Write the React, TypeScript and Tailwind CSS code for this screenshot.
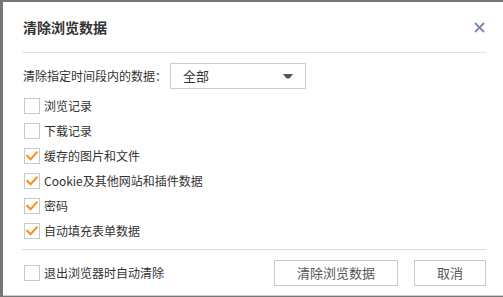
import React from 'react';

const font = { fontFamily: '"Noto Sans CJK SC", "Noto Sans", sans-serif' };

const items = [
  { label: '浏览记录', checked: false },
  { label: '下载记录', checked: false },
  { label: '缓存的图片和文件', checked: true },
  { label: 'Cookie及其他网站和插件数据', checked: true },
  { label: '密码', checked: true },
  { label: '自动填充表单数据', checked: true },
];

function Checkbox({ checked }: { checked: boolean }) {
  return (
    <span className="w-4 h-4 border border-[#c9c9c9] bg-white flex items-center justify-center flex-shrink-0">
      {checked && (
        <svg width="14" height="14" viewBox="0 0 14 14">
          <path d="M2.2 6.8 L5.6 10.2 L11.8 3.4" fill="none" stroke="#ff8a1c" strokeWidth="2" strokeLinecap="square" />
        </svg>
      )}
    </span>
  );
}

export default function App() {
  return (
    <div className="w-[503px] h-[297px] bg-[#767676] pl-[3px] pt-[2px] overflow-hidden" style={font}>
      <div className="h-[294px] bg-white border-b border-[#cfcfcf] pl-[19px] pr-[17px] text-[#333] text-[12px]">
        <div className="h-[50px] flex items-center justify-between">
          <h1 className="pl-px text-[14px] font-bold text-[#333]">清除浏览数据</h1>
          <svg width="11" height="11" viewBox="0 0 11 11" className="mr-px">
            <path d="M1 1 L10 10 M10 1 L1 10" stroke="#7b8aa6" strokeWidth="1.8" />
          </svg>
        </div>
        <div className="border-t border-[#dfe1e6]" />

        <div className="mt-[10px] flex items-center h-[26px]">
          <span className="w-[148px] pl-px">清除指定时间段内的数据：</span>
          <div className="w-[136px] h-[26px] border border-[#cccccc] flex items-center justify-between pl-[12px] pr-[12px]">
            <span className="text-[13px]">全部</span>
            <svg width="10" height="5" viewBox="0 0 10 5">
              <path d="M0 0 H10 L6.5 4.5 H3.5 Z" fill="#555" />
            </svg>
          </div>
        </div>

        <div className="mt-[4px]">
          {items.map((it) => (
            <label key={it.label} className="h-[25px] flex items-center gap-[4px] ml-[2px]">
              <Checkbox checked={it.checked} />
              <span>{it.label}</span>
            </label>
          ))}
        </div>

        <div className="mt-[6px] border-t border-[#dcdcdc]" />

        <div className="mt-[10px] h-[26px] flex items-center justify-between">
          <label className="flex items-center gap-[4px] ml-[2px]">
            <Checkbox checked={false} />
            <span>退出浏览器时自动清除</span>
          </label>
          <div className="flex gap-4">
            <button className="w-[124px] h-[26px] border border-[#c8c8c8] bg-white text-[13px] text-[#555]">清除浏览数据</button>
            <button className="w-[72px] h-[26px] border border-[#c8c8c8] bg-white text-[13px] text-[#555]">取消</button>
          </div>
        </div>
      </div>
    </div>
  );
}
